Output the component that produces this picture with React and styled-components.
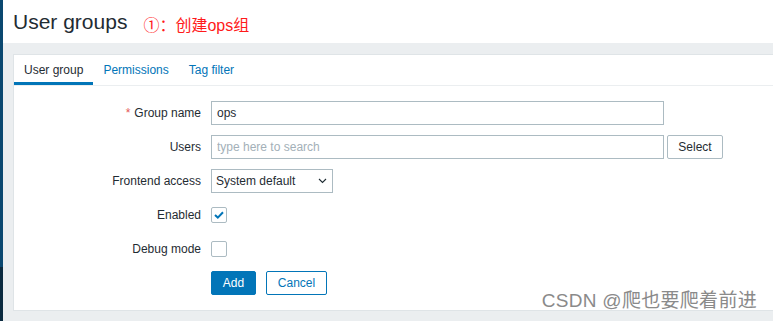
import React from "react";
import styled, { createGlobalStyle } from "styled-components";

const GlobalStyle = createGlobalStyle`
  html, body {
    margin: 0;
    padding: 0;
    background: #ebeef0;
    font-family: "Liberation Sans", Arial, sans-serif;
    font-size: 12px;
    color: #1f2c33;
  }
  * {
    box-sizing: border-box;
  }
`;

const Layout = styled.div`
  display: flex;
  height: 321px;
  position: relative;
  overflow: hidden;
`;

const Sidebar = styled.div`
  width: 3px;
  flex-shrink: 0;
  background: linear-gradient(to bottom, #0b4870 0, #0b4870 267px, #0b2a3f 267px);
`;

const Main = styled.div`
  flex: 1;
  display: flex;
  flex-direction: column;
  min-width: 0;
`;

const Header = styled.header`
  height: 44px;
  background: #ffffff;
  display: flex;
  align-items: center;
  padding-left: 10px;
`;

const Title = styled.h1`
  margin: 0;
  font-size: 21px;
  font-weight: normal;
  color: #1f2c33;
`;

const Note = styled.span`
  margin-left: 16px;
  margin-top: 4px;
  font-family: "Liberation Sans", "Noto Sans CJK SC", sans-serif;
  font-size: 16px;
  color: #ff1a1a;
`;

const Content = styled.div`
  flex: 1;
  padding: 11px 0 10px 10px;
  display: flex;
`;

const Panel = styled.div`
  flex: 1;
  background: #ffffff;
  border: 1px solid #dfe4e7;
  border-right: none;
`;

const Tabs = styled.ul`
  list-style: none;
  margin: 0;
  padding: 0;
  display: flex;
  border-bottom: 1px solid #ebeef0;
`;

const Tab = styled.li`
  padding: 8px 10px 5px;
  line-height: 14px;
  border-bottom: 3px solid ${(p) => (p.$active ? "#0275b8" : "transparent")};
  color: ${(p) => (p.$active ? "#1f2c33" : "#0275b8")};
`;

const Form = styled.form`
  display: grid;
  grid-template-columns: 187px 1fr;
  grid-auto-rows: 24px;
  column-gap: 10px;
  row-gap: 10px;
  padding: 15px 0 15px;
`;

const Label = styled.label`
  display: flex;
  align-items: center;
  justify-content: flex-end;
  white-space: nowrap;
`;

const Required = styled.span`
  color: #e45959;
  margin-right: 4px;
`;

const Field = styled.div`
  display: flex;
  align-items: center;
  grid-column: ${(p) => (p.$full ? "2" : "auto")};
`;

const TextInput = styled.input`
  width: 453px;
  height: 24px;
  border: 1px solid #acbbc2;
  border-radius: 0;
  padding: 0 5px;
  font-family: inherit;
  font-size: 12px;
  color: #1f2c33;
  outline: none;
  &::placeholder {
    color: #a3b0b8;
  }
`;

const SelectButton = styled.button`
  margin-left: 3px;
  width: 56px;
  height: 24px;
  border: 1px solid #acbbc2;
  border-radius: 2px;
  background: #ffffff;
  font-family: inherit;
  font-size: 12px;
  color: #1f2c33;
  padding: 0;
`;

const Dropdown = styled.div`
  width: 122px;
  height: 24px;
  border: 1px solid #acbbc2;
  display: flex;
  align-items: center;
  justify-content: space-between;
  padding: 0 5px 0 4px;
`;

const Check = styled.span`
  width: 16px;
  height: 16px;
  border: 1px solid #acbbc2;
  border-radius: 2px;
  display: flex;
  align-items: center;
  justify-content: center;
`;

const Button = styled.button`
  height: 24px;
  padding: 0;
  width: ${(p) => p.$width}px;
  margin-right: 10px;
  border-radius: 2px;
  border: 1px solid #0275b8;
  background: ${(p) => (p.$primary ? "#0275b8" : "#ffffff")};
  color: ${(p) => (p.$primary ? "#ffffff" : "#0275b8")};
  font-family: inherit;
  font-size: 12px;
`;

const Watermark = styled.div`
  position: absolute;
  right: 16px;
  bottom: 9px;
  font-family: "Liberation Sans", "Noto Sans CJK SC", sans-serif;
  font-size: 19px;
  letter-spacing: 0.3px;
  color: #8a8a8a;
  text-shadow: 0 0 1px #ffffff;
  white-space: nowrap;
`;

const Chevron = () => (
  <svg width="9" height="6" viewBox="0 0 9 6">
    <path d="M1 1l3.5 3.5L8 1" fill="none" stroke="#1f2c33" strokeWidth="1.1" />
  </svg>
);

const Tick = () => (
  <svg width="10" height="8" viewBox="0 0 10 8">
    <path d="M1 4l2.8 2.6L9 1.2" fill="none" stroke="#0275b8" strokeWidth="2" />
  </svg>
);

const App = () => {
  return (
    <>
      <GlobalStyle />
      <Layout>
        <Sidebar />
        <Main>
          <Header>
            <Title>User groups</Title>
            <Note>①：创建ops组</Note>
          </Header>
          <Content>
            <Panel>
              <Tabs>
                <Tab $active>User group</Tab>
                <Tab>Permissions</Tab>
                <Tab>Tag filter</Tab>
              </Tabs>
              <Form onSubmit={(e) => e.preventDefault()}>
                <Label>
                  <Required>*</Required>Group name
                </Label>
                <Field>
                  <TextInput defaultValue="ops" />
                </Field>

                <Label>Users</Label>
                <Field>
                  <TextInput placeholder="type here to search" />
                  <SelectButton type="button">Select</SelectButton>
                </Field>

                <Label>Frontend access</Label>
                <Field>
                  <Dropdown>
                    <span>System default</span>
                    <Chevron />
                  </Dropdown>
                </Field>

                <Label>Enabled</Label>
                <Field>
                  <Check>
                    <Tick />
                  </Check>
                </Field>

                <Label>Debug mode</Label>
                <Field>
                  <Check />
                </Field>

                <Field $full>
                  <Button $primary $width={45} type="submit">
                    Add
                  </Button>
                  <Button $width={61} type="button">
                    Cancel
                  </Button>
                </Field>
              </Form>
            </Panel>
          </Content>
        </Main>
        <Watermark>CSDN @爬也要爬着前进</Watermark>
      </Layout>
    </>
  );
};

export default App;
